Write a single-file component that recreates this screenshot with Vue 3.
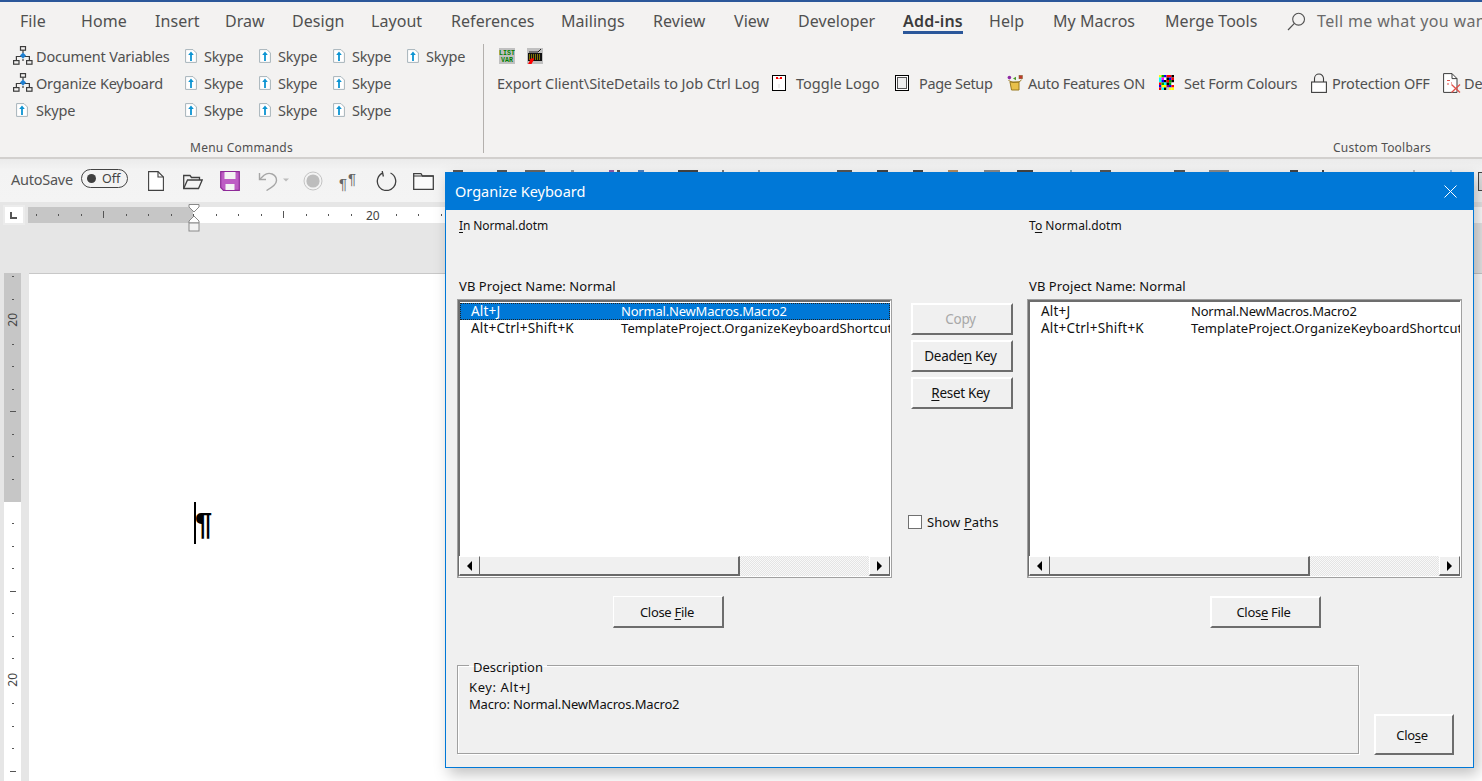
<script setup>
const tabs = [
  { t: 'File', w: 25, m: 36 }, { t: 'Home', w: 46, m: 28 }, { t: 'Insert', w: 43, m: 27 },
  { t: 'Draw', w: 39, m: 28 }, { t: 'Design', w: 51, m: 28 }, { t: 'Layout', w: 51, m: 29 },
  { t: 'References', w: 82, m: 28 }, { t: 'Mailings', w: 63, m: 29 }, { t: 'Review', w: 52, m: 29 },
  { t: 'View', w: 36, m: 28 }, { t: 'Developer', w: 77, m: 28 }, { t: 'Add-ins', w: 60, m: 26, active: true },
  { t: 'Help', w: 34, m: 30 }, { t: 'My Macros', w: 83, m: 29 }, { t: 'Merge Tools', w: 92, m: 30 }
]
const menuColumns = [
  { w: 169, items: [['org', 'Document Variables'], ['org', 'Organize Keyboard'], ['sky', 'Skype']] },
  { w: 74, items: [['sky', 'Skype'], ['sky', 'Skype'], ['sky', 'Skype']] },
  { w: 74, items: [['sky', 'Skype'], ['sky', 'Skype'], ['sky', 'Skype']] },
  { w: 74, items: [['sky', 'Skype'], ['sky', 'Skype'], ['sky', 'Skype']] },
  { w: 74, items: [['sky', 'Skype']] }
]
const customRow = [
  { t: 'Export Client\\SiteDetails to Job Ctrl Log', icon: '', w: 275, ls: -0.05 },
  { t: 'Toggle Logo', icon: 'logo', w: 123, ls: 0 },
  { t: 'Page Setup', icon: 'pagesetup', w: 112, ls: -0.35 },
  { t: 'Auto Features ON', icon: 'box', w: 152, ls: -0.25 },
  { t: 'Set Form Colours', icon: 'mosaic', w: 152, ls: -0.25 },
  { t: 'Protection OFF', icon: 'lock', w: 132, ls: -0.2 },
  { t: 'Delete', icon: 'del', w: 60, ls: 0 }
]
const mosaicColors = [
  '#ff0','#0a0','#00f','#f00','#f00','#000',
  '#0ff','#f0f','#fff','#000','#00f','#f00',
  '#0ff','#00f','#000','#f00','#0a0','#000',
  '#f00','#0a0','#0ff','#000','#0a0','#fff',
  '#00f','#ff0','#ff0','#800080','#00f','#f00',
  '#f00','#0ff','#000','#c0c0c0','#ff0','#ff0'
]
const qat = [
  { icon: 'q-new', w: 16, m: 19 }, { icon: 'q-open', w: 20, m: 17 }, { icon: 'q-save', w: 20, m: 18 },
  { icon: 'q-undo', w: 32, m: 13 }, { icon: 'q-rec', w: 20, m: 16 }, { icon: 'q-pil', w: 19, m: 18 },
  { icon: 'q-redo', w: 21, m: 16 }, { icon: 'q-fold', w: 21, m: 0 }
]
// tops of the toolbar icons that stick out above the dialog: [left x, width, colour]
const hiddenIcons = [
  [453, 10, '#555'], [497, 10, '#555'], [525, 20, '#666'], [571, 3, '#999'], [609, 5, '#8e5aa8'],
  [617, 3, '#555'], [638, 6, '#4a80c0'], [678, 20, '#444'], [722, 2, '#777'], [758, 2, '#999'],
  [837, 15, '#555'], [877, 11, '#444'], [913, 10, '#444'], [948, 10, '#b08a60'], [984, 16, '#888'],
  [1017, 16, '#444'], [1070, 2, '#8ab'], [1100, 11, '#555'], [1174, 11, '#555'], [1209, 20, '#888'],
  [1290, 8, '#444'], [1322, 2, '#444'], [1413, 2, '#bbb'], [1450, 2, '#9bd']
]
const rows = [
  ['Alt+J', 'Normal.NewMacros.Macro2'],
  ['Alt+Ctrl+Shift+K', 'TemplateProject.OrganizeKeyboardShortcuts']
]
const hTicks = Array.from({ length: 26 }, (_, i) => i)
const vGray = Array.from({ length: 10 }, (_, i) => i)
const vWhite = Array.from({ length: 12 }, (_, i) => i)
</script>

<template>
  <div class="word">
    <svg class="defs" width="0" height="0" aria-hidden="true">
      <symbol id="org" viewBox="0 0 20 20">
        <g fill="none" stroke="#3c3c3c" stroke-width="1.2">
          <rect x="7.5" y=".6" width="5" height="3.6" />
          <rect x=".6" y="14.6" width="5.4" height="3.6" />
          <rect x="13.6" y="14.6" width="5.4" height="3.6" />
          <path d="M3.4 14.5V10.5H16.4V14.5M10 4.2V7M10 13V15" />
        </g>
        <path d="M10 6.4L13 9.6L10 12.8L7 9.6Z" fill="#1f7fd0" />
      </symbol>
      <symbol id="sky" viewBox="0 0 12 14">
        <path d="M.6.6H8L11.4 4V13.4H.6Z" fill="#fff" stroke="#a6b3ba" stroke-width="1" />
        <path d="M6 2.4L8.8 6H6.9V12H5.1V6H3.2Z" fill="#0d94d2" />
      </symbol>
      <symbol id="logo" viewBox="0 0 14 16">
        <rect x=".5" y=".5" width="13" height="15" fill="#fff" stroke="#000" />
        <path d="M4 2H6V3H8V2H10V4H8V3.6H6V4H4Z" fill="#f00" />
        <path d="M7 9V13" stroke="#ddd" />
      </symbol>
      <symbol id="pagesetup" viewBox="0 0 14 16">
        <rect x=".5" y=".5" width="13" height="15" fill="#fff" stroke="#000" />
        <rect x="2.5" y="2.5" width="9" height="11" fill="#eee" stroke="#555" />
      </symbol>
      <symbol id="box" viewBox="0 0 16 16">
        <circle cx="2.4" cy="2.6" r="1.8" fill="#8e2aa5" />
        <rect x="12" y=".4" width="3.4" height="3.4" fill="#c0392b" stroke="#7a5a20" stroke-width=".5" />
        <path d="M6 3.5L9 1.8V5.2Z" fill="#4c9a2a" />
        <path d="M3 7H12V15H4.5Z" fill="#e9c04a" stroke="#9a7a20" />
        <path d="M1.5 5.5L6 7.5L12 7L14.5 5" fill="none" stroke="#9a7a20" />
      </symbol>
      <symbol id="mosaic" viewBox="0 0 15 15">
        <rect v-for="(c, i) in mosaicColors" :key="i" :x="(i % 6) * 2.5" :y="Math.floor(i / 6) * 2.5" width="2.5" height="2.5" :fill="c" />
      </symbol>
      <symbol id="lock" viewBox="0 0 16 20">
        <rect x=".6" y="9" width="14.8" height="10.4" fill="#fff" stroke="#3c3c3c" stroke-width="1.1" />
        <path d="M3.5 9V5.5A4.5 4.5 0 0 1 12.5 5.5V9" fill="none" stroke="#3c3c3c" stroke-width="1.1" />
      </symbol>
      <symbol id="del" viewBox="0 0 18 20">
        <path d="M.6.6H9L14 5.6V19.4H.6Z" fill="#fff" stroke="#3c3c3c" stroke-width="1" />
        <path d="M9 .6V5.6H14" fill="none" stroke="#3c3c3c" />
        <path d="M4 7.5H7M4 11H6M8 10H9" stroke="#e0534b" stroke-width="1.2" />
        <path d="M8.5 11.5L17 19.5M17 11.5L8.5 19.5" stroke="#e0534b" stroke-width="1.3" />
      </symbol>
      <symbol id="q-new" viewBox="0 0 16 20">
        <path d="M.6.6H10L15.4 6V19.4H.6Z" fill="#fff" stroke="#404040" stroke-width="1.1" />
        <path d="M10 .6V6H15.4" fill="none" stroke="#404040" stroke-width="1.1" />
      </symbol>
      <symbol id="q-open" viewBox="0 0 20 20">
        <path d="M.7 17.5V4.5H7L8.5 6.5H16.5V9" fill="none" stroke="#404040" stroke-width="1.3" />
        <path d="M.7 17.5L4.5 9H19.2L15.5 17.5Z" fill="#f3f3f3" stroke="#404040" stroke-width="1.3" />
      </symbol>
      <symbol id="q-save" viewBox="0 0 20 20">
        <path d="M.7.7H19.3V19.3H3.5L.7 16.5Z" fill="#bd5cc4" stroke="#8e2a98" stroke-width="1.2" />
        <rect x="4.5" y="1" width="11" height="7" fill="#f3f3f3" />
        <rect x="5.5" y="13" width="9" height="6" fill="#f3f3f3" />
      </symbol>
      <symbol id="q-undo" viewBox="0 0 32 20">
        <path d="M1.5 2V8.5H8" fill="none" stroke="#a6a6a6" stroke-width="1.4" />
        <path d="M1.8 8.3L6 4.2C11 0.5 18.5 3 18.5 9.5C18.5 13.5 14 16.5 8.5 19.5" fill="none" stroke="#a6a6a6" stroke-width="1.4" />
        <path d="M25 7.5H31L28 10.5Z" fill="#bcbcbc" />
      </symbol>
      <symbol id="q-rec" viewBox="0 0 20 20">
        <circle cx="10" cy="10" r="9" fill="none" stroke="#c4c4c4" stroke-width="1" />
        <circle cx="10" cy="10" r="6.6" fill="#bdbdbd" />
      </symbol>
      <symbol id="q-redo" viewBox="0 0 21 20">
        <path d="M7 1.8A9.2 9.2 0 1 0 14.5 2" fill="none" stroke="#404040" stroke-width="1.3" />
        <path d="M6.2 0L7.4 5.5" fill="none" stroke="#404040" stroke-width="1.3" />
      </symbol>
      <symbol id="q-fold" viewBox="0 0 21 20">
        <path d="M.7 2.7H8L9.5 5H20.3V18.3H.7Z" fill="#fafafa" stroke="#404040" stroke-width="1.3" />
        <path d="M.7 5H20.3" stroke="#404040" stroke-width="1.1" />
      </symbol>
      <symbol id="listvar" viewBox="0 0 16 16">
        <rect width="16" height="16" fill="#c0c0c0" />
        <text x="8" y="7" text-anchor="middle" font-family="Liberation Mono, monospace" font-size="6.6" font-weight="700" fill="#008000">LIST</text>
        <text x="8" y="14" text-anchor="middle" font-family="Liberation Mono, monospace" font-size="6.6" font-weight="700" fill="#008000">VAR</text>
      </symbol>
      <symbol id="keys" viewBox="0 0 16 16">
        <rect width="16" height="16" fill="#c0c0c0" />
        <path d="M2 4H11L14 1" fill="none" stroke="#222" />
        <rect x="1" y="5" width="14" height="8" fill="#111" />
        <path d="M2 7H14M2 9H14M2 11H14" stroke="#e8d800" stroke-dasharray="1 1" />
        <path d="M1 16L3.5 11.5H1L7 10L6.5 12.5L4.5 16Z" fill="#f00" />
      </symbol>
    </svg>

    <header class="tabs">
      <span v-for="tab in tabs" :key="tab.t" class="tab" :class="{ active: tab.active }"
        :style="{ width: tab.w + 'px', marginRight: tab.m + 'px' }">{{ tab.t }}</span>
      <svg class="search" width="19" height="19" viewBox="0 0 19 19">
        <circle cx="11.6" cy="7.2" r="5.9" fill="none" stroke="#505050" stroke-width="1.1" />
        <path d="M7.4 11.4L1 18" stroke="#505050" stroke-width="1.2" fill="none" />
      </svg>
      <span class="tell">Tell me what you want to do</span>
    </header>

    <section class="ribbon">
      <div class="group group-menu">
        <div class="menu-cols">
          <div v-for="(col, c) in menuColumns" :key="c" class="menu-col" :style="{ width: col.w + 'px' }">
            <div v-for="(item, i) in col.items" :key="i" class="cmd">
              <svg class="ic" :class="item[0]"><use :href="'#' + item[0]" /></svg>
              <span>{{ item[1] }}</span>
            </div>
          </div>
        </div>
        <div class="group-label">Menu Commands</div>
      </div>
      <div class="sep"></div>
      <div class="group group-custom">
        <div class="custom-top">
          <svg class="ic16"><use href="#listvar" /></svg>
          <svg class="ic16"><use href="#keys" /></svg>
        </div>
        <div class="custom-row">
          <div v-for="c in customRow" :key="c.t" class="cmd2" :style="{ width: c.w + 'px', letterSpacing: c.ls + 'px' }">
            <svg v-if="c.icon" class="ic2" :class="c.icon"><use :href="'#' + c.icon" /></svg>
            <span>{{ c.t }}</span>
          </div>
        </div>
        <div class="group-label right">Custom Toolbars</div>
      </div>
    </section>

    <section class="qat">
      <span class="autosave">AutoSave</span>
      <span class="toggle"><i></i>Off</span>
      <span class="qat-icons">
        <template v-for="q in qat" :key="q.icon">
          <span v-if="q.icon === 'q-pil'" class="pil" :style="{ width: q.w + 'px', marginRight: q.m + 'px' }"><span>¶</span><b>¶</b></span>
          <svg v-else class="qi" :style="{ width: q.w + 'px', marginRight: q.m + 'px' }"><use :href="'#' + q.icon" /></svg>
        </template>
      </span>
      <i v-for="h in hiddenIcons" :key="h[0]" class="peek" :style="{ left: h[0] + 'px', width: h[1] + 'px', background: h[2] }"></i>
      <i class="peek-edge"></i>
    </section>

    <section class="ruler-row">
      <div class="corner"><i></i></div>
      <div class="h-ruler">
        <div class="h-gray"></div>
        <div class="h-white"></div>
        <div class="h-marks">
          <template v-for="i in hTicks" :key="i">
            <span v-if="i === 15" class="num">20</span>
            <span v-else class="tick" :class="{ big: i === 3 || i === 11 || i === 19 }"></span>
          </template>
        </div>
        <svg class="indent" width="12" height="28" viewBox="0 0 12 28">
          <path d="M1 .5H11V3L6 8L1 3Z" fill="#fff" stroke="#8a8a8a" />
          <path d="M6 12L11 17V19H1V17Z" fill="#fff" stroke="#8a8a8a" />
          <rect x="1" y="19" width="10" height="8" fill="#f3f3f3" stroke="#8a8a8a" />
        </svg>
      </div>
    </section>

    <section class="doc">
      <div class="v-ruler">
        <div class="v-gray">
          <div v-for="i in vGray" :key="i" class="vc">
            <span v-if="i === 2" class="vnum">20</span>
            <i v-else class="vt" :class="{ big: i === 6 }"></i>
          </div>
        </div>
        <div class="v-white">
          <div v-for="i in vWhite" :key="i" class="vc">
            <span v-if="i === 7" class="vnum">20</span>
            <i v-else class="vt" :class="{ big: i === 3 || i === 11 }"></i>
          </div>
        </div>
      </div>
      <div class="doc-page">
        <div class="caret-line"></div>
        <div class="pilcrow">¶</div>
      </div>
    </section>

    <aside class="dialog">
      <div class="titlebar">
        <span>Organize Keyboard</span>
        <svg width="13" height="13" viewBox="0 0 13 13"><path d="M.5.5L12.5 12.5M12.5.5L.5 12.5" stroke="#fff" stroke-width="1" fill="none" /></svg>
      </div>
      <div class="dlg-body">
        <div class="dlg-main">
          <div class="pane">
            <div class="in-label"><u>I</u>n Normal.dotm</div>
            <div class="vb-label">VB Project Name: Normal</div>
            <div class="listbox sunken">
              <div class="list-rows">
                <div v-for="(r, i) in rows" :key="i" class="lrow" :class="['r' + i, { sel: i === 0 }]">
                  <span class="lk">{{ r[0] }}</span><span class="lv">{{ r[1] }}</span>
                </div>
              </div>
              <div class="hscroll">
                <span class="sb-btn"><i class="arr left"></i></span>
                <span class="sb-thumb"></span>
                <span class="sb-track"></span>
                <span class="sb-btn"><i class="arr right"></i></span>
              </div>
            </div>
            <div class="close-wrap left-close"><button class="btn flat file-btn">Close <u>F</u>ile</button></div>
          </div>

          <div class="mid">
            <button class="btn raised disabled">Copy</button>
            <button class="btn raised">Deade<u>n</u> Key</button>
            <button class="btn raised"><u>R</u>eset Key</button>
            <label class="show"><i class="chk"></i><span>Show <u>P</u>aths</span></label>
          </div>

          <div class="pane">
            <div class="in-label to-label">T<u>o</u> Normal.dotm</div>
            <div class="vb-label">VB Project Name: Normal</div>
            <div class="listbox sunken">
              <div class="list-rows">
                <div v-for="(r, i) in rows" :key="i" class="lrow" :class="'r' + i">
                  <span class="lk">{{ r[0] }}</span><span class="lv">{{ r[1] }}</span>
                </div>
              </div>
              <div class="hscroll">
                <span class="sb-btn"><i class="arr left"></i></span>
                <span class="sb-thumb"></span>
                <span class="sb-track"></span>
                <span class="sb-btn"><i class="arr right"></i></span>
              </div>
            </div>
            <div class="close-wrap right-close"><button class="btn raised file-btn">Clos<u>e</u> File</button></div>
          </div>
        </div>

        <div class="dlg-foot">
          <fieldset class="desc">
            <legend>Description</legend>
            <div class="key-line">Key: Alt+J</div>
            <div class="macro-line">Macro: Normal.NewMacros.Macro2</div>
          </fieldset>
          <button class="btn raised close-btn">Clo<u>s</u>e</button>
        </div>
      </div>
    </aside>
  </div>
</template>

<style scoped>
.word { position: relative; width: 1482px; height: 781px; overflow: hidden; background: #e6e6e6; font-family: "Noto Sans", sans-serif; color: #444; }
.defs { position: absolute; }

.tabs { display: flex; align-items: flex-start; height: 40px; box-sizing: border-box; border-top: 2px solid #2b579a; background: #f3f2f1; padding: 9px 0 0 20px; font-size: 16px; white-space: nowrap; color: #505050; overflow: hidden; }
.tab { display: block; height: 26px; line-height: 20px; flex: none; letter-spacing: .05px; }
.tab.active { font-weight: 600; color: #3c3c3c; border-bottom: 3px solid #2b579a; height: 20px; letter-spacing: .2px; }
.search { flex: none; margin: 1px 11px 0 0; }
.tell { color: #6a6a6a; line-height: 20px; letter-spacing: .35px; }

.ribbon { display: flex; height: 119px; box-sizing: border-box; background: #f3f2f1; border-bottom: 2px solid #d2d0ce; }
.group { position: relative; flex: none; }
.group-menu { width: 483px; padding: 3px 0 0 13px; box-sizing: border-box; margin-top: -1px; }
.menu-cols { display: flex; }
.menu-col { flex: none; }
.cmd { display: flex; align-items: center; height: 27px; font-size: 14.5px; color: #505050; white-space: nowrap; letter-spacing: -.2px; }
.ic { width: 12px; height: 14px; flex: none; margin: 0 7px 0 3px; }
.ic.org { width: 20px; height: 20px; margin: 0 3px 0 0; }
.menu-col:first-child .ic.sky { margin-right: 8px; }
.group-label { position: absolute; left: 0; right: 0; top: 100px; text-align: center; font-size: 12px; line-height: 16px; color: #505050; letter-spacing: .2px; }
.group-menu .group-label { top: 101px; }
.sep { width: 1px; height: 109px; margin-top: 4px; background: #b3b0ad; flex: none; }
.group-custom { flex: 1; padding: 4px 0 0 13px; min-width: 0; overflow: hidden; }
.custom-top { display: flex; gap: 12px; height: 21px; padding: 4px 0 0 2px; align-items: flex-start; }
.ic16 { width: 16px; height: 16px; flex: none; }
.custom-row { display: flex; align-items: center; height: 27px; font-size: 14.5px; color: #505050; white-space: nowrap; }
.cmd2 { display: flex; align-items: center; flex: none; }
.ic2 { width: 14px; height: 16px; margin-right: 10px; flex: none; }
.ic2.box { width: 16px; height: 16px; margin-right: 5px; }
.ic2.mosaic { width: 15px; height: 15px; margin-right: 10px; }
.ic2.lock { width: 16px; height: 20px; margin-right: 5px; }
.ic2.del { width: 18px; height: 20px; margin-right: 3px; }
.group-label.right { left: auto; right: 51px; }

.qat { position: relative; display: flex; align-items: center; height: 43px; padding-top: 1px; box-sizing: border-box; background: linear-gradient(#ebebeb, #f3f3f3 25%, #f4f4f4); }
.autosave { margin: 0 0 4px 11px; font-size: 14.5px; color: #555; width: 70px; letter-spacing: -.25px; }
.toggle { display: flex; align-items: center; width: 47px; height: 19px; box-sizing: border-box; border: 1px solid #444; border-radius: 10px; font-size: 12.5px; color: #444; margin: 0 20px 6px 0; padding-left: 5px; gap: 6px; }
.toggle i { width: 9px; height: 9px; border-radius: 50%; background: #404040; flex: none; }
.qat-icons { display: flex; align-items: center; }
.qi { height: 20px; flex: none; }
.pil { display: flex; flex: none; height: 20px; font-family: "Liberation Sans", sans-serif; font-size: 15px; color: #666; white-space: nowrap; }
.pil span { display: block; margin-top: 4px; line-height: 17px; }
.pil b { display: block; font-weight: 400; margin: 0 0 0 1px; line-height: 16px; }
.peek { position: absolute; top: 11px; height: 3px; }
.peek-edge { position: absolute; left: 1478px; top: 13px; width: 12px; height: 19px; box-sizing: border-box; border: 1px solid #444; background: #dedede; }

.ruler-row { position: relative; height: 71px; display: flex; align-items: flex-start; }
.corner { width: 22px; height: 20px; margin: 3px 0 0 3px; background: #fff; border: 2px solid #ececec; box-sizing: border-box; position: relative; flex: none; }
.corner i { position: absolute; left: 5px; top: 5px; width: 7px; height: 7px; border-left: 2px solid #555; border-bottom: 2px solid #555; box-sizing: border-box; }
.h-ruler { position: relative; margin: 5px 0 0 3px; width: 1454px; height: 16px; display: flex; flex: none; }
.h-gray { width: 165px; background: #c6c6c6; }
.h-white { flex: 1; background: #fff; }
.h-marks { position: absolute; left: 7.5px; top: 0; height: 16px; display: flex; align-items: center; width: 620px; }
.tick { width: 22.5px; flex: none; position: relative; height: 16px; }
.tick::before { content: ""; position: absolute; left: 0; top: 7px; width: 1px; height: 2px; background: #555; }
.tick.big::before { top: 4px; height: 7px; }
.num { width: 22.5px; flex: none; font-size: 12px; color: #444; text-indent: -7px; }
.indent { position: absolute; left: 160px; top: -3px; }

.doc { position: relative; flex: 1; display: flex; }
.v-ruler { width: 17px; margin-left: 4px; flex: none; display: flex; flex-direction: column; }
.v-gray { height: 229px; background: #c6c6c6; padding-top: 3px; box-sizing: border-box; flex: none; overflow: hidden; }
.v-white { flex: 1; background: #fff; padding-top: 21px; overflow: hidden; min-height: 0; }
.vc { height: 22.5px; display: flex; justify-content: center; align-items: flex-start; }
.vt { display: block; width: 2px; height: 1px; background: #555; flex: none; }
.vt.big { width: 6px; }
.vnum { writing-mode: vertical-rl; transform: rotate(180deg); font-size: 12px; color: #444; line-height: 14px; flex: none; margin-top: -8px; }
.doc-page { flex: 1; margin-left: 8px; background: #fff; border-top: 1px solid #c8c8c8; position: relative; padding: 228px 0 0 165px; display: flex; align-items: flex-start; }
.caret-line { width: 2px; height: 42px; background: #000; flex: none; }
.pilcrow { font: 700 31px/36px "Liberation Sans", sans-serif; color: #000; margin: 5px 0 0 -1px; }

.dialog { position: absolute; left: 445px; top: 172px; width: 1029px; height: 596px; box-sizing: border-box; border: 1px solid #0078d7; border-top: 0; background: #f0f0f0; box-shadow: 4px 6px 14px rgba(0, 0, 0, .25); font-size: 12.5px; color: #111; display: flex; flex-direction: column; }
.titlebar { height: 38px; flex: none; background: #0078d7; color: #fff; font-size: 14.5px; display: flex; align-items: center; justify-content: space-between; padding: 0 16px 0 9px; }
.dlg-body { flex: 1; display: flex; flex-direction: column; padding: 0 11px 12px 11px; min-height: 0; }
.dlg-main { display: flex; height: 441px; flex: none; }
.pane { width: 435px; flex: none; }
.in-label { height: 67px; padding: 8px 0 0 2px; box-sizing: border-box; font-size: 12px; line-height: 16px; letter-spacing: -.1px; }
.to-label { letter-spacing: .05px; }
.vb-label { height: 22px; padding-left: 2px; line-height: 18px; font-size: 13px; letter-spacing: .08px; }
.listbox { width: 435px; height: 279px; box-sizing: border-box; background: #fff; display: flex; flex-direction: column; overflow: hidden; }
.sunken { border: 2px solid; border-color: #6d6d6d #fff #fff #6d6d6d; outline: 1px solid #a0a0a0; outline-offset: -1px; box-shadow: inset 1px 1px 0 #6d6d6d; }
.list-rows { flex: 1; padding: 2px 0 0 1px; overflow: hidden; }
.lrow { display: flex; height: 17px; line-height: 17px; white-space: nowrap; font-size: 13px; overflow: hidden; }
.lrow.sel { background: #0078d7; color: #fff; outline: 1px dotted #222; outline-offset: -1px; }
.lk { width: 150px; padding-left: 11px; flex: none; font-size: 13.5px; letter-spacing: .2px; }
.lv { flex: none; }
.r0 .lv { letter-spacing: -.2px; }
.r1 .lv { letter-spacing: .1px; }
.hscroll { height: 20px; display: flex; flex: none; background: #f0f0f0; }
.sb-btn { width: 21px; flex: none; box-sizing: border-box; border-right: 1px solid #696969; border-bottom: 2px solid #696969; border-left: 1px solid #fff; border-top: 1px solid #fff; display: flex; align-items: center; justify-content: center; }
.sb-thumb { width: 260px; flex: none; box-sizing: border-box; border-right: 2px solid #696969; border-bottom: 2px solid #696969; border-top: 1px solid #fff; }
.sb-track { flex: 1; background: repeating-conic-gradient(#e4e4e4 0 25%, #f8f8f8 0 50%) 0 0 / 2px 2px; }
.arr { width: 0; height: 0; border-top: 5px solid transparent; border-bottom: 5px solid transparent; }
.arr.left { border-right: 5px solid #000; }
.arr.right { border-left: 5px solid #000; }
.close-wrap { display: flex; padding-top: 18px; }
.left-close { padding-left: 156px; }
.right-close { padding-left: 183px; }
.btn { font: inherit; color: #111; background: #f0f0f0; padding: 0; letter-spacing: -.3px; font-size: 13px; box-sizing: border-box; border: 2px solid; border-color: #fff #6d6d6d #6d6d6d #fff; }
.btn.flat { border: 1px solid; border-right-width: 2px; border-bottom-width: 2px; border-color: #fff #6d6d6d #6d6d6d #fff; }
.file-btn { width: 111px; height: 32px; padding-right: 2px; }
.right-close .file-btn { padding-right: 4px; }
.mid { width: 135px; flex: none; display: flex; flex-direction: column; align-items: flex-start; padding: 93px 0 0 19px; box-sizing: border-box; gap: 5px; }
.mid .btn { width: 102px; height: 32px; font-size: 13.5px; padding-right: 3px; }
.mid .disabled { color: #a8a8a8; }
.show { display: flex; align-items: center; gap: 5px; margin: 99px 0 0 -3px; font-size: 13px; white-space: nowrap; letter-spacing: .1px; }
.chk { width: 14px; height: 14px; box-sizing: border-box; background: #fff; border: 1px solid #707070; display: block; flex: none; }
.dlg-foot { display: flex; align-items: flex-end; margin-top: 7px; }
.desc { width: 902px; height: 96px; box-sizing: border-box; margin: 0 15px 0 0; padding: 7px 0 0 11px; border: 1px solid #a0a0a0; box-shadow: 1px 1px 0 #fff, inset 1px 1px 0 #fff; line-height: 17px; font-size: 13px; }
.desc legend { padding: 0 4px; margin-left: 0; line-height: 14px; font-size: 13px; position: relative; top: 2px; }
.key-line { letter-spacing: .6px; }
.macro-line { letter-spacing: -.17px; }
.close-btn { width: 80px; height: 41px; margin-bottom: -1px; padding-right: 4px; }
u { text-underline-offset: 2px; }
</style>
